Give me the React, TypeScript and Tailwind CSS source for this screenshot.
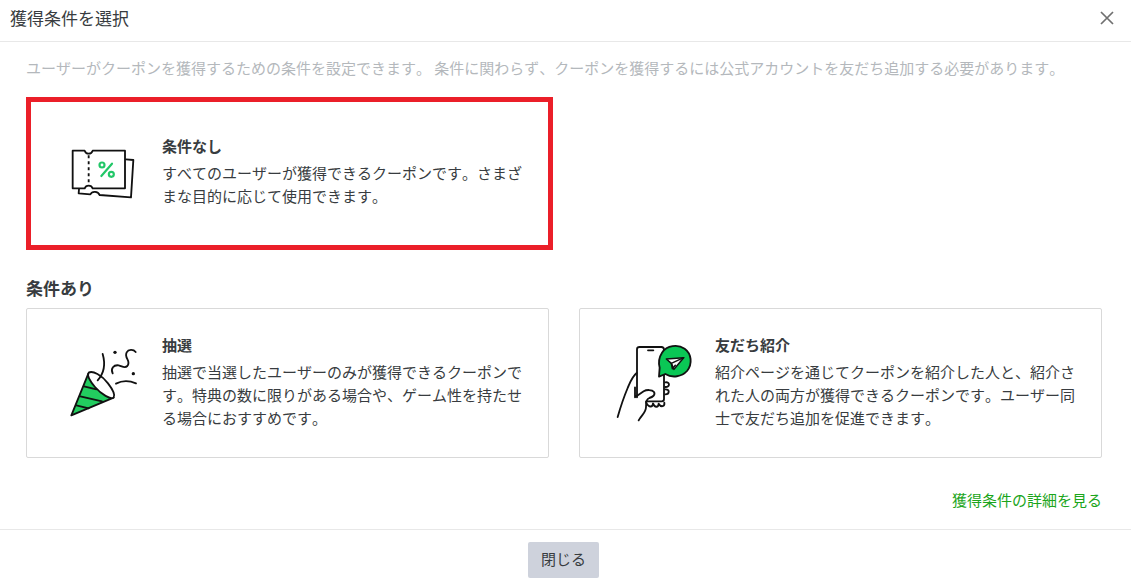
import type { ReactNode } from "react";
import clsx from "clsx";

const CouponIcon = () => (
  <svg viewBox="6 -18 240 240" className="size-20 shrink-0" fill="none" stroke="#111" strokeWidth="5.5" strokeLinejoin="round" strokeLinecap="round" aria-hidden="true">
    <path d="M198 64 L220 66 L213 178 L119 171 C114 160 97 158 91 169 L56 166 L57 153"/>
    <path d="M38 38 H74 C78 50 94 50 98 38 H195 V151 H98 C94 140 78 140 74 151 H38 Z" fill="#fff"/>
    <path d="M86 52 V137" strokeDasharray="9 9" strokeLinecap="butt"/>
    <g stroke="#22c768" strokeWidth="6.5">
      <circle cx="126" cy="81" r="7.5"/>
      <circle cx="154" cy="109" r="7.5"/>
      <path d="M156 77 L124 114"/>
    </g>
  </svg>
);

const CrackerIcon = () => (
  <svg viewBox="6 9 240 240" className="size-20 shrink-0" fill="none" stroke="#111" strokeWidth="5.5" strokeLinejoin="round" strokeLinecap="round" aria-hidden="true">
    <path d="M85 101 L34 226 L161 173 C132 168 93 132 85 101 Z" fill="#22cc5f"/>
    <path d="M72 139 L109 148 M61 169 L126 184 M49 196 L86 205"/>
    <path d="M86 98 C98 91 125 105 144 130 C158 148 166 164 161 172 C152 180 124 163 105 141 C90 123 81 105 86 98 Z" fill="#fff"/>
    <path d="M128 42 C136 70 134 98 113 121"/>
    <path d="M158 100 C151 85 161 74 176 76 C188 79 194 86 202 78 C215 63 191 54 200 37 C205 28 220 27 227 36"/>
    <path d="M168 131 C185 122 209 122 228 130"/>
    <circle cx="165" cy="37" r="5" fill="#111" stroke="none"/>
    <circle cx="220" cy="101" r="5" fill="#111" stroke="none"/>
  </svg>
);

const PhoneIcon = () => (
  <svg viewBox="15 24 240 240" className="size-20 shrink-0" fill="none" stroke="#111" strokeWidth="5.5" strokeLinejoin="round" strokeLinecap="round" aria-hidden="true">
    <path d="M81 187 V43 Q81 36 89 36 H154 Q162 36 162 44 V192 Q162 199 155 199 H108"/>
    <path d="M114 46 H130"/>
    <path d="M80 114 C66 125 60 143 53 159 C42 185 33 211 23 246"/>
    <path d="M75 157 V187 L101 169 C109 164 126 163 132 171 C137 180 128 186 118 189 C106 193 109 207 108 216 C108 233 96 238 86 256"/>
    <path d="M166 142 C180 139 181 157 166 156 M166 163 C180 162 179 178 166 178"/>
    <path d="M108 203 C117 218 128 218 129 205 C134 218 145 219 146 206 C153 218 165 215 163 203"/>
    <path d="M149 98 L147 125 L166 117 C187 130 216 125 231 108 C248 87 245 56 224 41 C203 27 171 31 156 53 C147 67 145 83 149 98 Z" fill="#0ac755"/>
    <path d="M169 72 L221 68 L192 103 L184 85 Z" fill="#fff" strokeWidth="4.5"/>
    <path d="M221 68 L184 85 L187 101 L196 91" strokeWidth="4.5"/>
  </svg>
);

const CloseIcon = () => (
  <svg viewBox="0 0 14 14" className="size-3.5" stroke="#707070" strokeWidth="1.7" aria-hidden="true">
    <path d="M1 1 L13 13 M13 1 L1 13"/>
  </svg>
);

interface ConditionCardProps {
  title: string;
  description: string;
  icon: ReactNode;
  selected?: boolean;
}

const ConditionCard = ({ title, description, icon, selected }: ConditionCardProps) => (
  <button
    type="button"
    className={clsx(
      "flex items-center gap-5 bg-white pr-6 text-left",
      selected
        ? "-mr-1 border-5 border-[#eb1f29] pt-[30px] pb-[33px] pl-[31px]"
        : "rounded-xs border border-[#d9d9d9] py-6 pl-[35px]"
    )}
  >
    {icon}
    <span className="flex flex-col gap-1 pb-1">
      <span className="font-bold">{title}</span>
      <span>{description}</span>
    </span>
  </button>
);

const App = () => (
  <div
    role="dialog"
    aria-labelledby="dialog-title"
    lang="ja"
    className="bg-white font-['Noto_Sans_CJK_JP',sans-serif] text-[15px] leading-[23px] text-[#383c40] [font-kerning:none]"
  >
    <header className="flex items-center justify-between border-b border-[#e8e8e8] pt-[5px] pr-[17px] pb-[11px] pl-2.5">
      <h2 id="dialog-title" className="text-[17px] leading-[25px]">獲得条件を選択</h2>
      <button type="button" aria-label="閉じる">
        <CloseIcon/>
      </button>
    </header>

    <main className="pt-3.5 pr-[29px] pb-[18px] pl-[26px]">
      <p className="mb-[18px] text-[#b4b8bc]">
        ユーザーがクーポンを獲得するための条件を設定できます。 条件に関わらず、クーポンを獲得するには公式アカウントを友だち追加する必要があります。
      </p>

      <div className="grid grid-cols-2 gap-[30px]">
        <ConditionCard
          title="条件なし"
          description="すべてのユーザーが獲得できるクーポンです。さまざまな目的に応じて使用できます。"
          icon={<CouponIcon/>}
          selected
        />
      </div>

      <h3 className="mt-[26px] mb-2 text-[17px] leading-6 font-bold">条件あり</h3>
      <div className="grid grid-cols-2 gap-[30px]">
        <ConditionCard
          title="抽選"
          description="抽選で当選したユーザーのみが獲得できるクーポンです。特典の数に限りがある場合や、ゲーム性を持たせる場合におすすめです。"
          icon={<CrackerIcon/>}
        />
        <ConditionCard
          title="友だち紹介"
          description="紹介ページを通じてクーポンを紹介した人と、紹介された人の両方が獲得できるクーポンです。ユーザー同士で友だち追加を促進できます。"
          icon={<PhoneIcon/>}
        />
      </div>

      <div className="mt-[30px] text-right">
        <a href="#details" className="text-[#1ba51b]">獲得条件の詳細を見る</a>
      </div>
    </main>

    <footer className="flex justify-center border-t border-[#e8e8e8] pt-3 pr-1 pb-2">
      <button type="button" className="h-9 rounded-xs bg-[#ced2dc] px-[13px] pb-1">
        閉じる
      </button>
    </footer>
  </div>
);

export default App;
